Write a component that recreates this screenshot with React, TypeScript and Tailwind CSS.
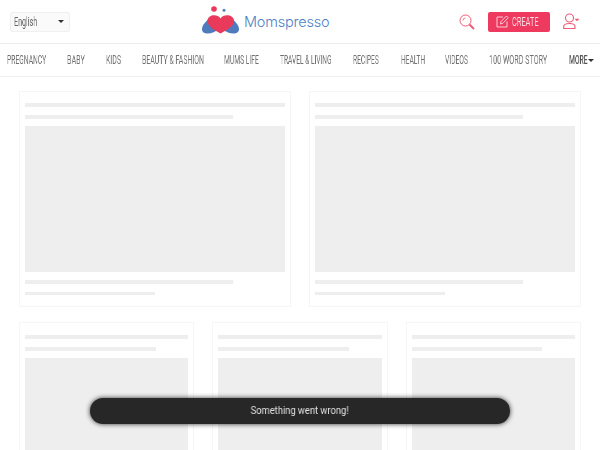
function Cond({ w, s, children }: { w: string; s: string; children: string }) {
  return (
    <span className={`inline-block whitespace-nowrap ${w}`}>
      <span className={`inline-block origin-left will-change-transform ${s}`}>{children}</span>
    </span>
  );
}

function Logo() {
  return (
    <svg width="38" height="28" viewBox="0 0 38 28" className="mb-[3px] shrink-0">
      <circle cx="12" cy="3" r="2.800" fill="#ea3a5c" />
      <circle cx="22" cy="4.200" r="1.500" fill="#5580bf" />
      <path d="M0 23 C0 19 5 14 8.500 11.500 L18 23 L11 26.500 C6 28.500 0 28 0 23Z" fill="#4f7bbd" />
      <path d="M37 23 C37 19 32 14 28.500 11.500 L19 23 L26 26.500 C31 28.500 37 28 37 23Z" fill="#4f7bbd" />
      <path d="M18.500 12.500 C15.500 7.500 5.500 8.500 5.500 15 C5.500 20.500 13 24.500 18.500 27.500 C24 24.500 32 20.500 32 15 C32 8.500 21.500 7.500 18.500 12.500Z" fill="#ea3a5c" />
    </svg>
  );
}

function Search() {
  return (
    <svg width="16" height="16" viewBox="0 0 16 16" fill="none" stroke="#ef5b78" strokeWidth="1">
      <circle cx="6.500" cy="6.500" r="5.500" />
      <path d="M4 6.500a2.500 2.500 0 0 1 2.500-2.500" strokeWidth="0.800" />
      <path d="M10.500 10.500 L15 15" strokeWidth="2" />
    </svg>
  );
}

function Edit() {
  return (
    <svg width="13" height="13" viewBox="0 0 13 13" fill="none" stroke="#ffffff" strokeWidth="0.900" opacity="0.85">
      <path d="M7 2 H1 V12 H11 V6.500" />
      <path d="M4.500 9 L5 6.500 L10.500 1 L12.300 2.800 L6.800 8.300 Z" />
    </svg>
  );
}

function User() {
  return (
    <svg width="17" height="17" viewBox="0 0 17 17" fill="none" stroke="#ef5b78" strokeWidth="1.100">
      <circle cx="6.500" cy="5" r="4" />
      <path d="M0.700 15.500 V13.500 C0.700 11.500 3 10.500 6.500 10.500 C10 10.500 12 11.500 12 13.500 V15.500 Z" />
      <path d="M11.500 5.800 H16.500 L14 8.300 Z" fill="#ef5b78" stroke="none" />
    </svg>
  );
}

function Card() {
  return (
    <div className="h-[216px] border border-[#f6f6f6] px-[5px] pt-[11px]">
      <div className="h-1 bg-[#eeeeee]" />
      <div className="mt-2 h-1 w-4/5 bg-[#eeeeee]" />
      <div className="mt-[7px] h-[146px] bg-[#eeeeee]" />
      <div className="mt-2 h-1 w-4/5 bg-[#eeeeee]" />
      <div className="mt-2 h-[3px] w-1/2 bg-[#eeeeee]" />
    </div>
  );
}

function Card3() {
  return (
    <div className="h-[216px] border border-[#f6f6f6] px-[5px] pt-[12px]">
      <div className="h-1 bg-[#eeeeee]" />
      <div className="mt-2 h-1 w-4/5 bg-[#eeeeee]" />
      <div className="mt-[7px] h-[147px] bg-[#eeeeee]" />
    </div>
  );
}

const nav: [string, string, string][] = [
  ["PREGNANCY", "w-[39px]", "scale-x-[0.56]"],
  ["BABY", "w-[18px]", "scale-x-[0.6]"],
  ["KIDS", "w-[15px]", "scale-x-[0.58]"],
  ["BEAUTY & FASHION", "w-[61px]", "scale-x-[0.58]"],
  ["MUMS LIFE", "w-[35px]", "scale-x-[0.56]"],
  ["TRAVEL & LIVING", "w-[52px]", "scale-x-[0.55]"],
  ["RECIPES", "w-[27px]", "scale-x-[0.55]"],
  ["HEALTH", "w-[23px]", "scale-x-[0.55]"],
  ["VIDEOS", "w-[23px]", "scale-x-[0.56]"],
  ["100 WORD STORY", "w-[59px]", "scale-x-[0.6]"],
];

export default function App() {
  return (
    <div className="relative h-[450px] w-[600px] overflow-hidden bg-white font-['Roboto',sans-serif]">
      <header className="flex h-[44px] items-center border-b border-[#ececec] pr-[20px] pl-[10px]">
        <div className="flex h-[20px] w-[60px] items-center justify-between rounded-[2px] border border-[#f0f0f0] bg-[#fafafa] pr-[5px] pl-[3px] text-[13px] text-[#666666]">
          <Cond w="w-[26px]" s="scale-x-[0.55]">English</Cond>
          <span className="h-0 w-0 border-x-[3px] border-t-[3px] border-x-transparent border-t-[#333333]" />
        </div>
        <div className="ml-[132px] flex items-center gap-[4px]">
          <Logo />
          <span className="font-['Inter',sans-serif] text-[14.5px] font-light tracking-[-0.2px] text-[#4f7fc4]">Momspresso</span>
        </div>
        <div className="ml-auto flex items-center">
          <Search />
          <div className="ml-[13px] flex h-[20px] w-[62px] items-center justify-center gap-[3px] rounded-[2px] bg-[#ee3a5f] text-[13px] text-[#fbdde3]">
            <Edit />
            <Cond w="w-[30px]" s="scale-x-[0.57]">CREATE</Cond>
          </div>
          <div className="ml-[13px]">
            <User />
          </div>
        </div>
      </header>
      <nav className="flex h-[33px] items-center gap-[21px] border-b border-[#f0f0f0] px-[7px] text-[12px] text-[#707070]">
        {nav.map(([n, w, s]) => (
          <Cond key={n} w={w} s={s}>{n}</Cond>
        ))}
        <span className="flex items-center font-medium text-[#555555]">
          <Cond w="w-[19px]" s="scale-x-[0.56]">MORE</Cond>
          <span className="h-0 w-0 border-x-[3px] border-t-[3px] border-x-transparent border-t-[#333333]" />
        </span>
      </nav>
      <main className="px-[19px] pt-[14px]">
        <div className="grid grid-cols-2 gap-[18px]">
          <Card />
          <Card />
        </div>
        <div className="mt-[15px] grid grid-cols-3 gap-[18px]">
          <Card3 />
          <Card3 />
          <Card3 />
        </div>
      </main>
      <div className="absolute top-[398px] left-[90px] flex h-[26px] w-[420px] items-center justify-center rounded-[13px] bg-[#272727] text-[11px] text-[#e0e0e0] shadow-[0_0_5px_rgba(0,0,0,0.8)]">
        <span className="inline-block scale-x-[0.85] will-change-transform">Something went wrong!</span>
      </div>
    </div>
  );
}
